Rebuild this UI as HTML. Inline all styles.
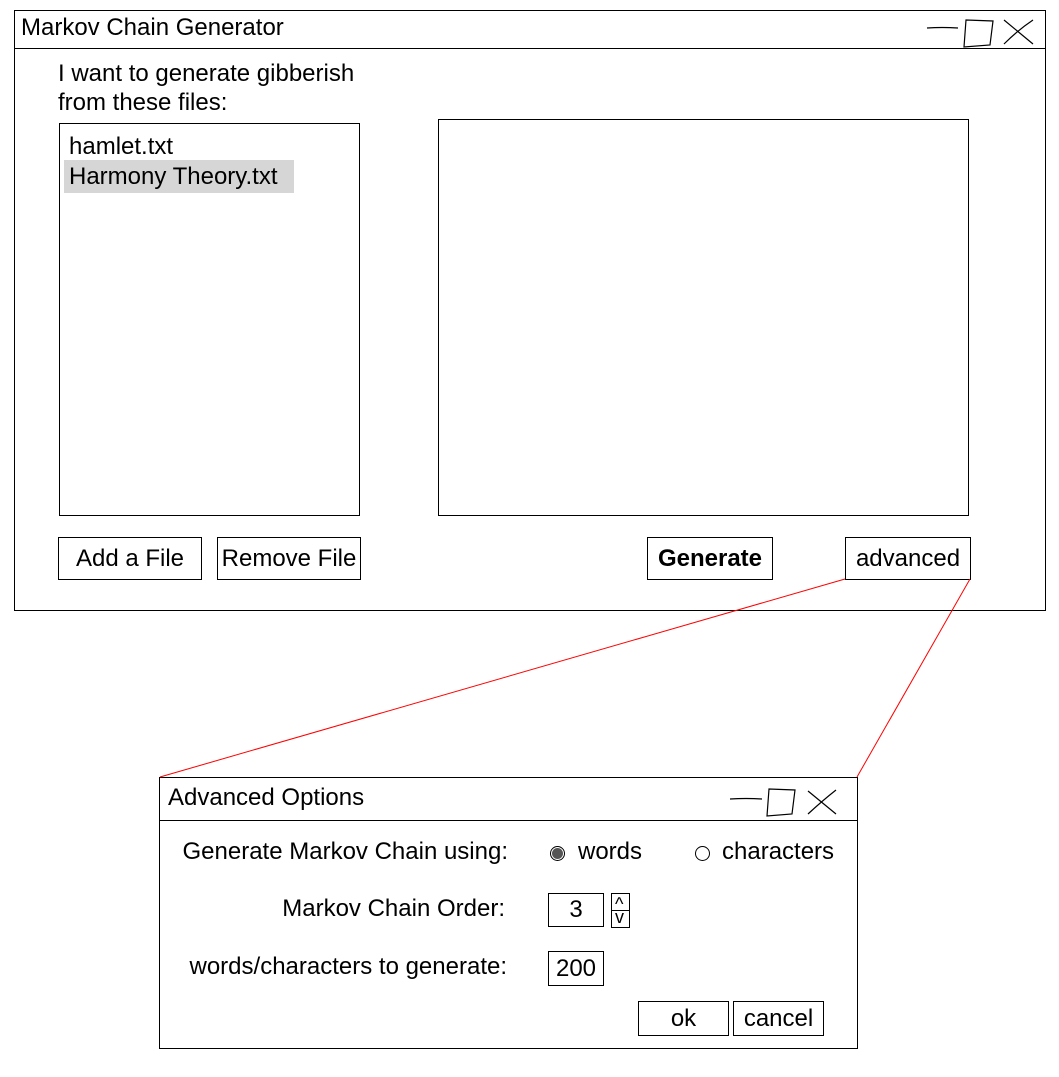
<!DOCTYPE html>
<html><head><meta charset="utf-8"><style>
body{margin:0;width:1059px;height:1077px;background:#fff;position:relative;font-family:"Liberation Sans",sans-serif;color:#000;overflow:hidden}
.b{position:absolute;border:1px solid #000;box-sizing:border-box;background:#fff}
.t{position:absolute;white-space:nowrap;font-size:24px;line-height:28px}
.btn{position:absolute;border:1px solid #000;box-sizing:border-box;background:#fff;font-size:24px;display:flex;align-items:center;justify-content:center}
</style></head><body>
<div class="b" style="left:14px;top:10px;width:1032px;height:601px"></div>
<div class="b" style="left:14px;top:48px;width:1032px;height:1px;border:none;background:#000"></div>
<div class="t" style="left:21px;top:14px">Markov Chain Generator</div>
<div class="t" style="left:58px;top:60px">I want to generate gibberish</div>
<div class="t" style="left:58px;top:89px">from these files:</div>
<div class="b" style="left:59px;top:123px;width:301px;height:393px"></div>
<div style="position:absolute;left:64px;top:160px;width:230px;height:33px;background:#d6d6d6"></div>
<div class="t" style="left:69px;top:133px">hamlet.txt</div>
<div class="t" style="left:69px;top:163px">Harmony Theory.txt</div>
<div class="b" style="left:438px;top:119px;width:531px;height:397px"></div>
<div class="btn" style="left:58px;top:537px;width:144px;height:43px">Add a File</div>
<div class="btn" style="left:217px;top:537px;width:144px;height:43px">Remove File</div>
<div class="btn" style="left:647px;top:537px;width:126px;height:43px;font-weight:bold">Generate</div>
<div class="btn" style="left:845px;top:537px;width:126px;height:43px">advanced</div>

<div class="b" style="left:159px;top:777px;width:699px;height:272px"></div>
<div style="position:absolute;left:159px;top:820px;width:699px;height:1px;background:#000"></div>
<div class="t" style="left:168px;top:784px">Advanced Options</div>
<div class="t" style="right:551px;top:838px">Generate Markov Chain using:</div>
<div class="t" style="right:554px;top:895px">Markov Chain Order:</div>
<div class="t" style="right:552px;top:953px">words/characters to generate:</div>
<div style="position:absolute;left:550px;top:846px;width:15px;height:15px;border:1px solid #000;border-radius:50%;box-sizing:border-box;background:#fff"></div>
<div style="position:absolute;left:552px;top:848px;width:11px;height:11px;border-radius:50%;background:#555"></div>
<div class="t" style="left:578px;top:838px">words</div>
<div style="position:absolute;left:695px;top:846px;width:15px;height:15px;border:1px solid #000;border-radius:50%;box-sizing:border-box"></div>
<div class="t" style="left:722px;top:838px">characters</div>
<div class="btn" style="left:548px;top:893px;width:56px;height:34px">3</div>
<div class="b" style="left:611px;top:893px;width:19px;height:35px"></div>
<div style="position:absolute;left:611px;top:910px;width:19px;height:1px;background:#000"></div>
<div class="t" style="left:615px;top:895px;font-size:18px;line-height:18px">^</div>
<div class="t" style="left:615px;top:908px;font-size:18px;line-height:18px">v</div>
<div class="btn" style="left:548px;top:951px;width:56px;height:35px">200</div>
<div class="btn" style="left:638px;top:1001px;width:91px;height:35px">ok</div>
<div class="btn" style="left:733px;top:1001px;width:91px;height:35px">cancel</div>

<svg style="position:absolute;left:0;top:0" width="1059" height="1077" fill="none" stroke="#000" stroke-width="1.2">
<line x1="845" y1="579" x2="160" y2="777" stroke="#f00" stroke-width="1"/>
<line x1="970" y1="579" x2="857" y2="777" stroke="#f00" stroke-width="1"/>
<path d="M927 28 Q942 27 958 28"/>
<path d="M966 20 L993 21 L990 45 L964 47 Z"/>
<path d="M1004 20 L1033 44 M1004 44 Q1018 30 1033 20"/>
<path d="M730 799 Q746 798 762 799"/>
<path d="M769 789 L795 790 L792 814 L767 816 Z"/>
<path d="M808 791 L836 814 M808 814 Q822 801 836 790"/>
</svg>
</body></html>
